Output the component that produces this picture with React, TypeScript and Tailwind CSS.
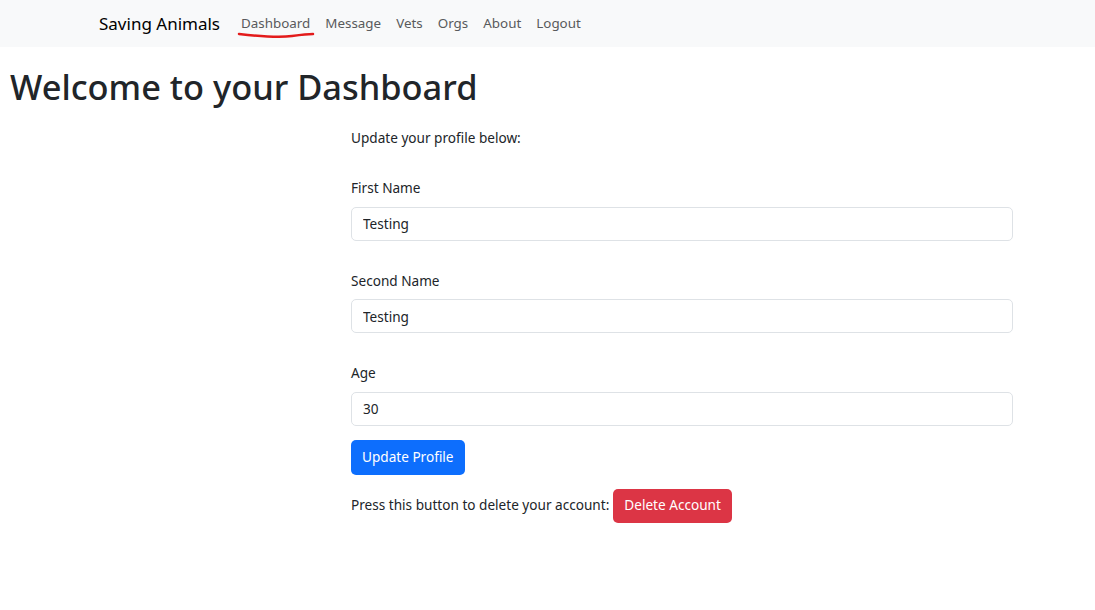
export default function App() {
  const links = ["Dashboard", "Message", "Vets", "Orgs", "About", "Logout"]

  return (
    <div className="min-h-screen bg-white text-[#212529] font-['Noto_Sans',sans-serif]">
      {/* Navbar */}
      <nav className="h-[47px] bg-[#f8f9fa] flex items-center pl-[99px]">
        <span className="text-[17px] text-black mr-[21px]">Saving Animals</span>
        <ul className="flex items-center gap-[15px] text-[13.4px] text-[#595a5c]">
          {links.map((l) => (
            <li key={l} className="relative">
              {l}
              {l === "Dashboard" && (
                <svg className="absolute left-[-4px] top-[18px]" width="80" height="10" viewBox="0 0 80 10">
                  <path d="M2 3 C 20 5, 40 7, 55 5 S 72 3, 76 3" stroke="#e31b1b" strokeWidth="2.5" fill="none" strokeLinecap="round" />
                </svg>
              )}
            </li>
          ))}
        </ul>
      </nav>

      <h1 className="text-[34.4px] font-medium leading-tight ml-[10px] mt-[18px]">Welcome to your Dashboard</h1>

      {/* Profile form */}
      <div className="ml-[351px] w-[662px] text-[13.6px] mt-[20px]">
        <p className="mb-[30px]">Update your profile below:</p>

        {[
          ["First Name", "Testing"],
          ["Second Name", "Testing"],
          ["Age", "30"],
        ].map(([label, value], i) => (
          <div key={label} className={i < 2 ? "mb-[30px]" : "mb-[14px]"}>
            <label className="block mb-[8px]">{label}</label>
            <input
              defaultValue={value}
              className="w-full h-[34px] px-[11px] border border-[#dee2e6] rounded-[5px] text-[13.6px] outline-none"
            />
          </div>
        ))}

        <button className="h-[35px] px-[11px] bg-[#0d6efd] text-white rounded-[5px] text-[13.6px]">Update Profile</button>

        <div className="flex items-center mt-[14px]">
          <span>Press this button to delete your account:</span>
          <button className="ml-[4px] h-[34px] px-[11px] bg-[#dc3545] text-white rounded-[5px] text-[13.6px]">Delete Account</button>
        </div>
      </div>
    </div>
  )
}
